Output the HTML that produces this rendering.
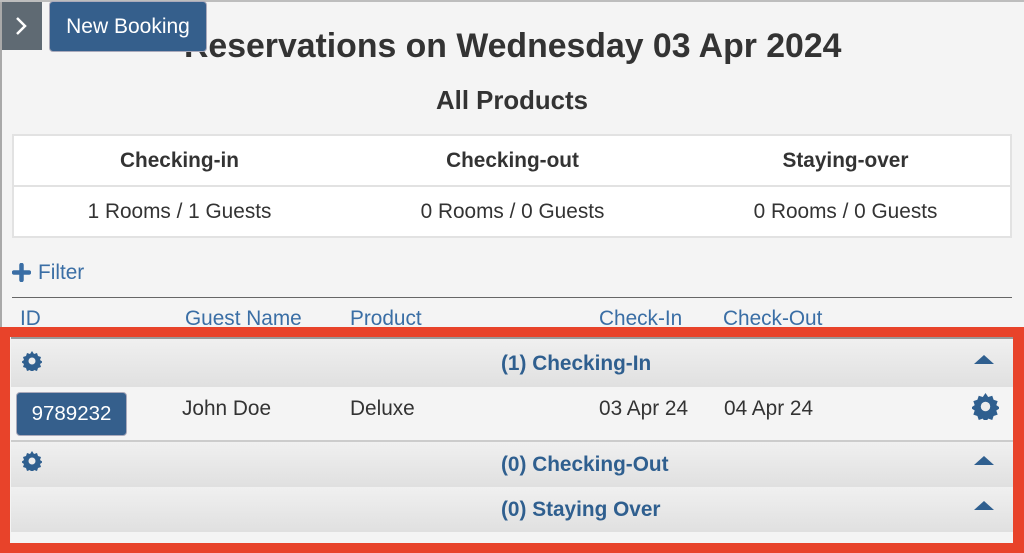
<!DOCTYPE html>
<html><head><meta charset="utf-8"><style>
*{margin:0;padding:0;box-sizing:border-box}
body{width:1024px;height:553px;overflow:hidden;background:#f4f4f4;font-family:"Liberation Sans",Arial,sans-serif;position:relative;color:#333}
.a{position:absolute;white-space:nowrap}
.blue{color:#3a6ea5}
.hdr{position:absolute;left:11px;width:1002px;background:linear-gradient(#f0f0f0,#e0e0e0);}
.ht{position:absolute;left:490px;font-weight:bold;font-size:20.8px;color:#2f5f8f}
.tri{position:absolute;right:19px;width:0;height:0;border-left:10px solid transparent;border-right:10px solid transparent;border-bottom:9px solid #2f5f8f}
.t{font-size:20.8px}
</style></head><body>
<div class="a" style="left:0;top:0;width:2px;height:553px;background:#a9a9a9"></div>
<div class="a" style="left:0;top:0;width:1024px;height:2px;background:#bdbdbd"></div>
<div class="a" style="left:184px;top:27px;font-size:33.8px;font-weight:bold;color:#333">Reservations on Wednesday 03 Apr 2024</div>
<div class="a" style="left:2px;top:2px;width:40px;height:48px;background:#5f6a73"></div>
<svg class="a" style="left:14px;top:16px" width="14" height="20" viewBox="0 0 14 20"><path d="M3 2 L11 10 L3 18" stroke="#fff" stroke-width="2.5" fill="none"/></svg>
<div class="a" style="left:49px;top:1px;width:158px;height:51px;background:#355f8c;border:1px solid #aab;border-radius:4px;color:#fff;font-size:21px;line-height:50px;text-align:center">New Booking</div>
<div class="a" style="left:0;width:1024px;top:87px;text-align:center;font-size:25.8px;font-weight:bold;color:#333">All Products</div>
<div class="a" style="left:12px;top:134px;width:1000px;height:104px;background:#fff;border:2px solid #e2e2e2"></div>
<div class="a" style="left:13px;top:185px;width:998px;height:2px;background:#e2e2e2"></div>
<div class="a" style="left:13px;width:333px;top:149px;text-align:center;font-weight:bold;font-size:20.8px">Checking-in</div>
<div class="a" style="left:346px;width:333px;top:149px;text-align:center;font-weight:bold;font-size:20.8px">Checking-out</div>
<div class="a" style="left:679px;width:333px;top:149px;text-align:center;font-weight:bold;font-size:20.8px">Staying-over</div>
<div class="a t" style="left:13px;width:333px;top:200px;text-align:center">1 Rooms / 1 Guests</div>
<div class="a t" style="left:346px;width:333px;top:200px;text-align:center">0 Rooms / 0 Guests</div>
<div class="a t" style="left:679px;width:333px;top:200px;text-align:center">0 Rooms / 0 Guests</div>
<svg class="a" style="left:12px;top:263px" width="19" height="19" viewBox="0 0 19 19"><path d="M9.5 2v15M2 9.5h15" stroke="#3a6ea5" stroke-width="4.5" stroke-linecap="round"/></svg>
<div class="a blue t" style="left:38px;top:261px">Filter</div>
<div class="a" style="left:12px;top:297px;width:1000px;height:1px;background:#666"></div>
<div class="a blue t" style="left:20px;top:307px">ID</div>
<div class="a blue t" style="left:185px;top:307px">Guest Name</div>
<div class="a blue t" style="left:350px;top:307px">Product</div>
<div class="a blue t" style="left:599px;top:307px">Check-In</div>
<div class="a blue t" style="left:723px;top:307px">Check-Out</div>
<div class="a" style="left:0;top:327px;width:1024px;height:226px;border:10px solid #e8432a;border-right-width:11px;background:#f4f4f4"></div>
<div class="a" style="left:11px;top:337px;width:1002px;height:2px;background:#999"></div>
<div class="hdr" style="top:339px;height:48px"><div class="ht" style="top:13px">(1) Checking-In</div><div class="tri" style="top:16px"></div></div>
<div class="a" style="left:16px;top:392px;width:111px;height:44px;background:#355f8c;border:1px solid #aab;border-radius:4px;color:#fff;font-size:20.5px;line-height:42px;text-align:center">9789232</div>
<div class="a t" style="left:182px;top:397px">John Doe</div>
<div class="a t" style="left:350px;top:397px">Deluxe</div>
<div class="a t" style="left:599px;top:397px">03 Apr 24</div>
<div class="a t" style="left:724px;top:397px">04 Apr 24</div>
<div class="a" style="left:11px;top:440px;width:1002px;height:2px;background:#ccc"></div>
<div class="hdr" style="top:442px;height:45px"><div class="ht" style="top:11px">(0) Checking-Out</div><div class="tri" style="top:14px"></div></div>
<div class="hdr" style="top:487px;height:45px"><div class="ht" style="top:11px">(0) Staying Over</div><div class="tri" style="top:14px"></div></div>
<svg width="0" height="0" style="position:absolute"><defs><g id="g"><path d="M10 0l2 3 3-1 1 3 3 1-1 3 3 2-3 2 1 3-3 1-1 3-3-1-2 3-2-3-3 1-1-3-3-1 1-3-3-2 3-2-1-3 3-1 1-3 3 1z" fill="#2f5f8f"/><circle cx="10" cy="10" r="3.5" fill="#ececec"/></g></defs></svg>
<svg class="a" style="left:22px;top:351px" width="20" height="20" viewBox="0 0 20 20"><use href="#g"/></svg>
<svg class="a" style="left:22px;top:451px" width="20" height="20" viewBox="0 0 20 20"><use href="#g"/></svg>
<svg class="a" style="left:972px;top:393px" width="27" height="27" viewBox="0 0 20 20"><use href="#g"/></svg>
</body></html>
